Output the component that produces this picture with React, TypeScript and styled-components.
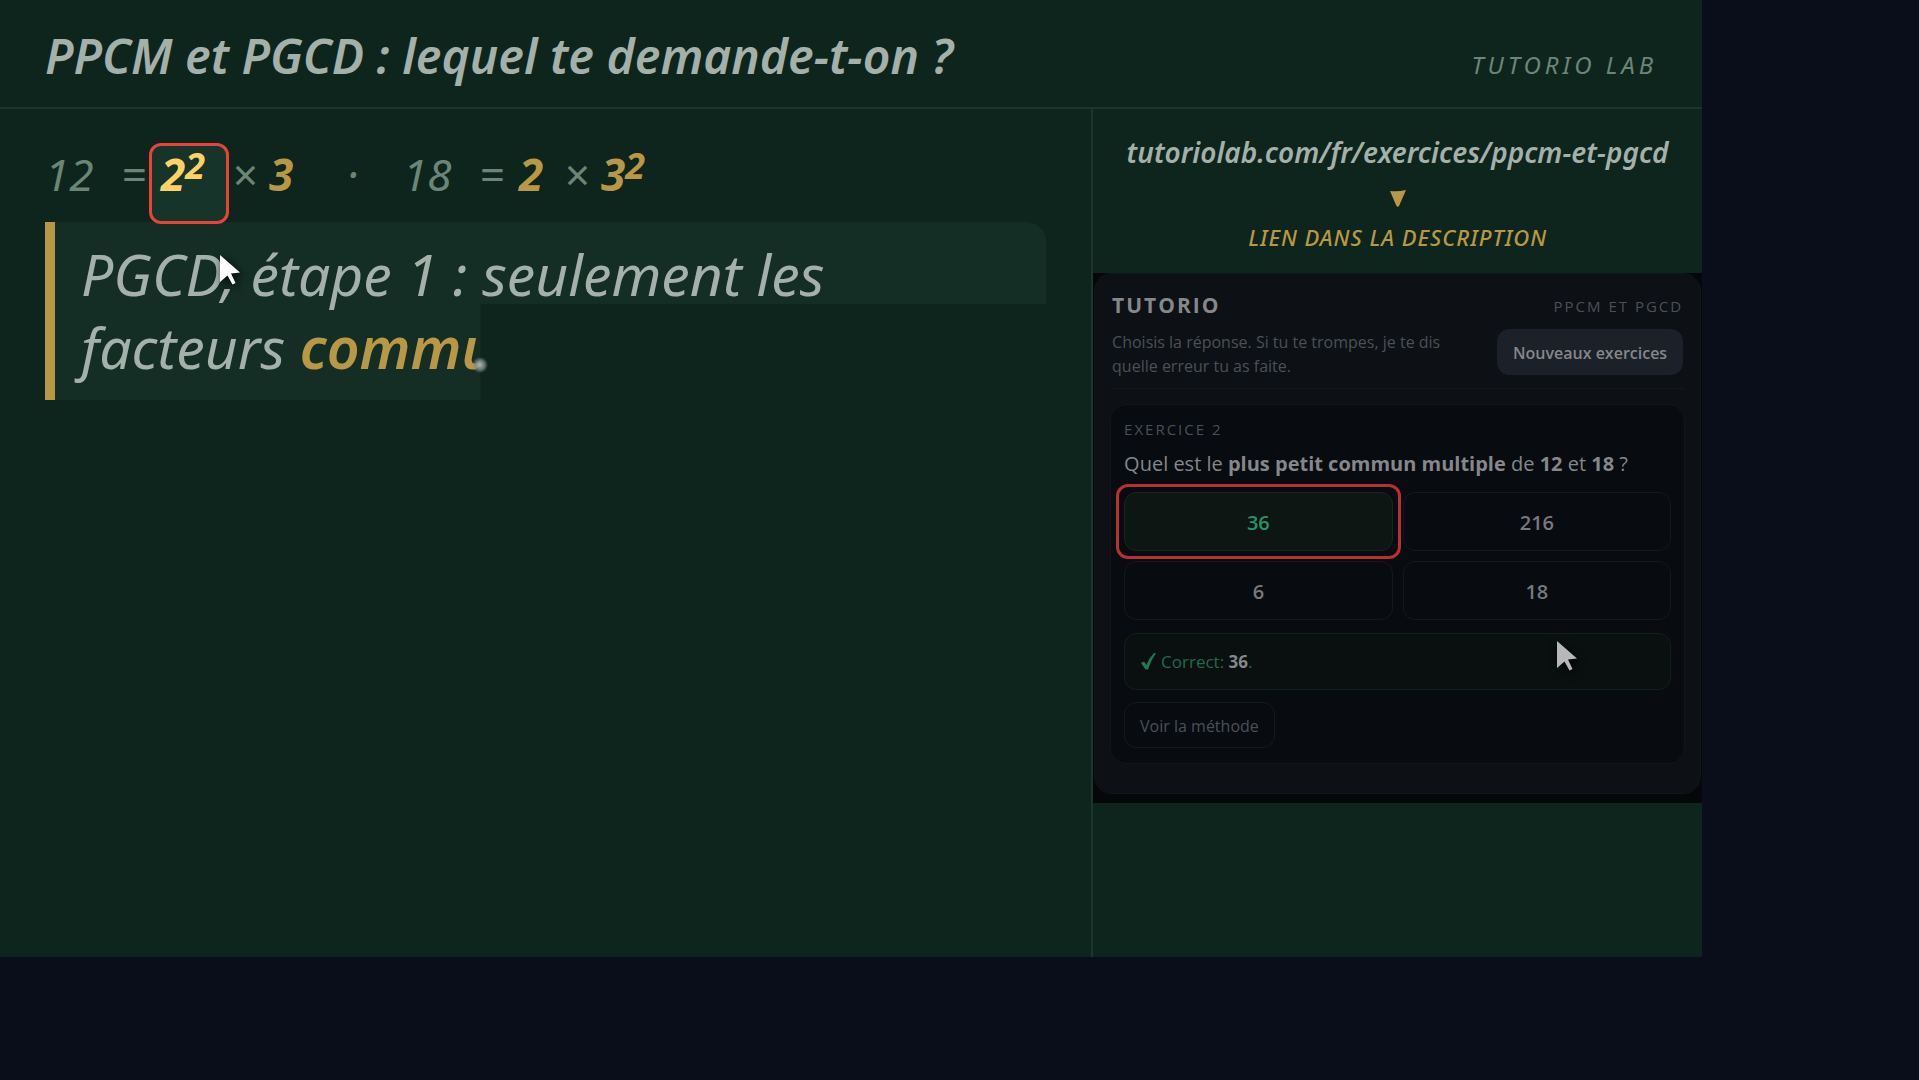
import React from "react";
import styled, { createGlobalStyle } from "styled-components";

const c = {
  page: "#090e1a",
  board: "#0e251d",
  line: "#1a372e",
  chalk: "#a4b0aa",
  faint: "#6b8679",
  gold: "#b99845",
  red: "#ea4335",
};

const hand = `"Noto Sans", "Open Sans", sans-serif`;
const ui = `"Open Sans", "Noto Sans", sans-serif`;

const GlobalStyle = createGlobalStyle`
  *, *::before, *::after { box-sizing: border-box; }
  body { margin: 0; background: ${c.page}; }
  h1, h2, p { margin: 0; }
`;

const Board = styled.div`
  width: 88.7vw;
  aspect-ratio: 16 / 9;
  display: flex;
  flex-direction: column;
  background: ${c.board};
  color: ${c.chalk};
  font-family: ${hand};
`;

const TopBar = styled.header`
  display: flex;
  justify-content: space-between;
  align-items: baseline;
  padding: 26px 45px 21px;
  border-bottom: 2px solid ${c.line};
  font-style: italic;
`;

const Title = styled.h1`
  font-size: 48px;
  line-height: 60px;
  font-weight: 600;
`;

const Brand = styled.span`
  font-size: 24px;
  letter-spacing: 4px;
  color: ${c.faint};
`;

const Columns = styled.div`
  flex: 1;
  display: grid;
  grid-template-columns: minmax(0, 1fr) 35.9%;
`;

const Lesson = styled.main`
  padding: 30px 45px;
  font-style: italic;
`;

const Equation = styled.div`
  display: flex;
  margin-bottom: 15px;
  padding-top: 2px;
  font-size: 44px;
  line-height: 66px;
  color: ${c.faint};
`;

const Token = styled.span<{ $w: number }>`
  flex: none;
  width: ${(p) => p.$w}px;
`;

const Factor = styled(Token)<{ $lit?: boolean }>`
  position: relative;
  isolation: isolate;
  z-index: ${(p) => (p.$lit ? 1 : 0)};
  color: ${(p) => (p.$lit ? "#ffd166" : c.gold)};
  font-weight: 700;
`;

const Power = styled.sup`
  font-size: 36px;
  line-height: 0;
  vertical-align: 12px;
`;

const FactorRing = styled.span`
  position: absolute;
  z-index: -1;
  inset: 2px 3px -17px -12px;
  border: 3px solid ${c.red};
  border-radius: 12px;
  background: #16342a;
`;

const StepWrap = styled.div`
  position: relative;
`;

const Step = styled.p`
  padding: 16px 26px;
  border-left: 10px solid ${c.gold};
  border-radius: 0 20px 20px 0;
  background: #142d25;
  font-size: 57px;
  line-height: 73px;
  clip-path: polygon(0 0, 100% 0, 100% 46%, 43.5% 46%, 43.5% 100%, 0 100%);

  strong {
    color: ${c.gold};
    font-weight: 600;
  }
`;

const PenTip = styled.span`
  position: absolute;
  left: 43.5%;
  top: 80.5%;
  width: 16px;
  height: 16px;
  margin: -8px;
  border-radius: 50%;
  background: radial-gradient(circle, #aab5b0 0%, #7d8b85cc 40%, transparent 72%);
`;

const Pointer = styled.svg<{ $x: string; $y: string; $fill: string }>`
  position: absolute;
  left: ${(p) => p.$x};
  top: ${(p) => p.$y};
  width: 20px;
  height: 30px;
  overflow: visible;
  fill: ${(p) => p.$fill};
  filter: drop-shadow(2px 3px 4px rgba(0, 0, 0, 0.8));
`;

const Side = styled.aside`
  border-left: 2px solid ${c.line};
`;

const LinkBlock = styled.div`
  height: 164px;
  padding-top: 25px;
  display: flex;
  flex-direction: column;
  align-items: center;
  font-style: italic;
`;

const SiteLink = styled.a`
  font-size: 28px;
  line-height: 36px;
  font-weight: 600;
  color: ${c.chalk};
  text-decoration: none;
`;

const Triangle = styled.svg`
  width: 16px;
  height: 18px;
  margin: 20px 0 13px;
  fill: ${c.gold};
`;

const LinkHint = styled.span`
  font-size: 22px;
  line-height: 32px;
  font-weight: 500;
  letter-spacing: 1px;
  color: ${c.gold};
`;

const Frame = styled.div`
  padding: 0 1px 9px;
  background: #050708;
`;

const Widget = styled.section`
  position: relative;
  padding: 18px 15px 29px;
  border: 1px solid #11151a;
  border-radius: 18px;
  background: #0d1014;
  color: #85878a;
  font-family: ${ui};
`;

const WidgetHead = styled.div`
  display: grid;
  grid-template-columns: 1fr auto;
  align-items: end;
  padding: 0 2px 10px;
  border-bottom: 1px solid #12171c;
`;

const Logo = styled.h2`
  font-size: 21px;
  line-height: 26px;
  font-weight: 700;
  letter-spacing: 2px;
`;

const Overline = styled.span`
  font-size: 15px;
  line-height: 24px;
  letter-spacing: 2px;
  color: #4b5057;
  text-align: right;
`;

const Intro = styled.p`
  padding-top: 12px;
  font-size: 16px;
  line-height: 24px;
  color: #4b5057;
`;

const Button = styled.button<{ $solid?: boolean }>`
  height: 46px;
  margin-bottom: ${(p) => (p.$solid ? 3 : 0)}px;
  padding: 2px 15px 0;
  border: 1px solid ${(p) => (p.$solid ? "#1c2028" : "#14191e")};
  border-radius: 12px;
  background: ${(p) => (p.$solid ? "#1c2028" : "transparent")};
  color: ${(p) => (p.$solid ? "#85878a" : "#4b5057")};
  font-family: inherit;
  font-size: 16px;
  font-weight: ${(p) => (p.$solid ? 600 : 400)};
`;

const Exercise = styled.div`
  margin-top: 15px;
  padding: 12px 13px 15px;
  border: 1px solid #12161b;
  border-radius: 16px;
  background: #080b10;
`;

const Question = styled.p`
  margin: 8px 0 13px;
  font-size: 20px;
  line-height: 30px;
`;

const Choices = styled.div`
  display: grid;
  grid-template-columns: 1fr 1fr;
  gap: 10px;
`;

const Choice = styled.button<{ $right?: boolean }>`
  position: relative;
  height: 59px;
  padding: 2px 0 0;
  border: 1px solid ${(p) => (p.$right ? "#12291f" : "#14191e")};
  border-radius: 12px;
  background: ${(p) => (p.$right ? "#0d1612" : "#080b10")};
  color: ${(p) => (p.$right ? "#2a9167" : "#77797c")};
  font-family: inherit;
  font-size: 20px;
  font-weight: 600;
`;

const ChoiceRing = styled.span`
  position: absolute;
  inset: -9px;
  border: 3px solid #b93030;
  border-radius: 12px;
`;

const Verdict = styled.div`
  display: flex;
  align-items: center;
  gap: 4px;
  height: 57px;
  margin: 13px 0 12px;
  padding: 0 16px;
  border: 1px solid #11201a;
  border-radius: 12px;
  background: #09100f;
  color: #1f6b4b;
  font-size: 17px;

  strong { color: #85878a; }
`;

const Check = styled.svg`
  width: 16px;
  height: 17px;
  fill: #1f7a53;
`;

const arrow = "M0 0 L20 17.500 L11 18.500 L15.500 28 L12.500 29.500 L7.500 20.500 L0 27 Z";

export default function App() {
  return (
    <>
      <GlobalStyle />
      <Board>
        <TopBar>
          <Title>PPCM et PGCD : lequel te demande-t-on ?</Title>
          <Brand>TUTORIO LAB</Brand>
        </TopBar>
        <Columns>
          <Lesson>
            <Equation>
              <Token $w={76}>12</Token>
              <Token $w={40}>=</Token>
              <Factor $w={71} $lit>
                <FactorRing />2<Power>2</Power>
              </Factor>
              <Token $w={37}>×</Token>
              <Factor $w={78}>3</Factor>
              <Token $w={56}>·</Token>
              <Token $w={76}>18</Token>
              <Token $w={40}>=</Token>
              <Factor $w={45}>2</Factor>
              <Token $w={37}>×</Token>
              <Factor $w={71}>
                3<Power>2</Power>
              </Factor>
            </Equation>
            <StepWrap>
              <Step>
                PGCD, étape 1 : seulement les facteurs <strong>communs</strong>
              </Step>
              <PenTip />
              <Pointer $x="175px" $y="33px" $fill="#ffffff" viewBox="0 0 20 30" aria-hidden="true">
                <path d={arrow} />
              </Pointer>
            </StepWrap>
          </Lesson>
          <Side>
            <LinkBlock>
              <SiteLink href="#exercices">tutoriolab.com/fr/exercices/ppcm-et-pgcd</SiteLink>
              <Triangle viewBox="0 0 16 18" aria-hidden="true">
                <path d="M0 1 Q8 2 16 0 L9 16 Q7 18 6 15 Z" />
              </Triangle>
              <LinkHint>LIEN DANS LA DESCRIPTION</LinkHint>
            </LinkBlock>
            <Frame>
              <Widget id="exercices">
                <WidgetHead>
                  <Logo>TUTORIO</Logo>
                  <Overline>PPCM ET PGCD</Overline>
                  <Intro>
                    Choisis la réponse. Si tu te trompes, je te dis
                    <br />
                    quelle erreur tu as faite.
                  </Intro>
                  <Button $solid>Nouveaux exercices</Button>
                </WidgetHead>
                <Exercise>
                  <Overline>EXERCICE 2</Overline>
                  <Question>
                    Quel est le <strong>plus petit commun multiple</strong> de <strong>12</strong> et{" "}
                    <strong>18</strong> ?
                  </Question>
                  <Choices>
                    <Choice $right>
                      36
                      <ChoiceRing />
                    </Choice>
                    <Choice>216</Choice>
                    <Choice>6</Choice>
                    <Choice>18</Choice>
                  </Choices>
                  <Verdict>
                    <Check viewBox="0 0 16 17" aria-hidden="true">
                      <path d="M0 10 L3 8.500 L5.500 12 Q8 5 13 0 L15 0 Q10 7 7 16.500 L4.500 16.500 Z" />
                    </Check>
                    <span>
                      Correct: <strong>36</strong>.
                    </span>
                  </Verdict>
                  <Button>Voir la méthode</Button>
                </Exercise>
                <Pointer $x="76.4%" $y="367px" $fill="#b8b8b8" viewBox="0 0 20 30" aria-hidden="true">
                  <path d={arrow} />
                </Pointer>
              </Widget>
            </Frame>
          </Side>
        </Columns>
      </Board>
    </>
  );
}
